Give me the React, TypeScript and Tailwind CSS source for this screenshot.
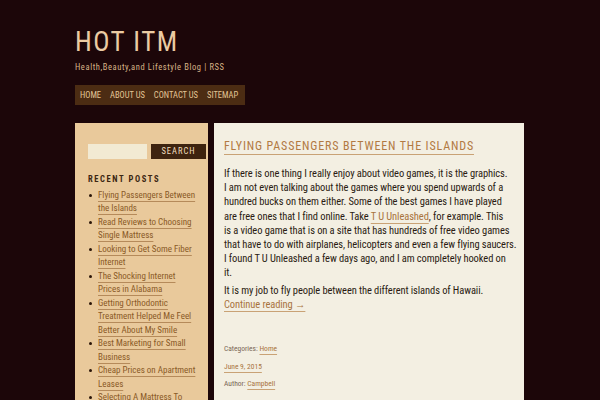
const posts = [
  ["Flying Passengers Between", "the Islands"],
  ["Read Reviews to Choosing", "Single Mattress"],
  ["Looking to Get Some Fiber", "Internet"],
  ["The Shocking Internet", "Prices in Alabama"],
  ["Getting Orthodontic", "Treatment Helped Me Feel", "Better About My Smile"],
  ["Best Marketing for Small", "Business"],
  ["Cheap Prices on Apartment", "Leases"],
  ["Selecting A Mattress To", "Improve Your Sleep"],
];

const body = [
  "If there is one thing I really enjoy about video games, it is the graphics.",
  "I am not even talking about the games where you spend upwards of a",
  "hundred bucks on them either. Some of the best games I have played",
];

const font = { fontFamily: '"Roboto Condensed", "Liberation Sans", sans-serif' };

const link = "underline decoration-[#c9a275] underline-offset-[3px]";

export default function App() {
  return (
    <div className="h-[400px] w-[600px] overflow-hidden bg-[#1c0609]" style={font}>
      <div className="ml-[75px] w-[450px]">
        {/* header */}
        <div className="pt-[27px] text-[27px] leading-[30px] tracking-[1.5px] text-[#ebcba3]">HOT ITM</div>
        <div className="mt-[4px] text-[8.5px] leading-[12px] tracking-[0.6px] text-[#d7b387]">
          Health,Beauty,and Lifestyle Blog | RSS
        </div>
        <nav className="mt-[12px] flex h-[20px] w-[170px] items-center gap-[9px] whitespace-nowrap bg-[#4c2c13] px-[5px] text-[8.5px] uppercase text-[#e3c596]">
          <span>Home</span>
          <span>About Us</span>
          <span>Contact Us</span>
          <span>Sitemap</span>
        </nav>

        <div className="mt-[18px] flex gap-[6px]">
          {/* sidebar */}
          <aside className="h-[300px] w-[133px] shrink-0 bg-[#e9c99b] pl-[13px] pr-[2px] pt-[21px]">
            <div className="flex gap-[4px]">
              <div className="h-[15px] w-[59px] bg-[#f2ead3]" />
              <div className="flex h-[15px] w-[55px] items-center justify-center bg-[#3e230f] text-[8.5px] tracking-[1px] text-[#f1dfbf]">
                SEARCH
              </div>
            </div>
            <div className="mt-[14px] text-[8.5px] font-bold tracking-[1.6px] text-[#3b2612]">RECENT POSTS</div>
            <ul className="mt-[3px] whitespace-nowrap text-[9px] leading-[13.5px] text-[#8a5a27]">
              {posts.map((p, i) => (
                <li key={i} className="relative pl-[10px]">
                  <span className="absolute left-[1px] top-[5px] h-[3px] w-[3px] rounded-full bg-[#2a1508]" />
                  {p.map((line, j) => (
                    <div key={j}>
                      <span className="underline decoration-[#b58a5a] underline-offset-[3px]">{line}</span>
                    </div>
                  ))}
                </li>
              ))}
            </ul>
          </aside>

          {/* main */}
          <main className="h-[300px] w-[310px] bg-[#f3efe2] px-[10px] pt-[10px]">
            <h1 className="inline-block whitespace-nowrap border-b border-[#c9a275] pb-[1px] text-[12px] leading-[14px] tracking-[0.85px] text-[#b27a43]">
              FLYING PASSENGERS BETWEEN THE ISLANDS
            </h1>
            <div className="mt-[10px] whitespace-nowrap text-[10.5px] leading-[14.2px] tracking-[-0.1px] text-[#2b1c12]">
              {body.map((l, i) => (
                <div key={i}>{l}</div>
              ))}
              <div>
                are free ones that I find online. Take <span className={`text-[#a8733d] ${link}`}>T U Unleashed</span>, for
                example. This
              </div>
              <div>is a video game that is on a site that has hundreds of free video games</div>
              <div>that have to do with airplanes, helicopters and even a few flying saucers.</div>
              <div>I found T U Unleashed a few days ago, and I am completely hooked on</div>
              <div>it.</div>
              <div className="mt-[3px]">It is my job to fly people between the different islands of Hawaii.</div>
              <div>
                <span className={`text-[#a8733d] ${link}`}>Continue reading →</span>
              </div>
            </div>
            <div className="mt-[28px] text-[7.5px] leading-[17.5px] text-[#7a6655]">
              <div>
                Categories: <span className={`text-[#a8733d] ${link}`}>Home</span>
              </div>
              <div className="text-[#a8733d]">
                <span className={link}>June 9, 2015</span>
              </div>
              <div>
                Author: <span className={`text-[#a8733d] ${link}`}>Campbell</span>
              </div>
            </div>
          </main>
        </div>
      </div>
    </div>
  );
}
